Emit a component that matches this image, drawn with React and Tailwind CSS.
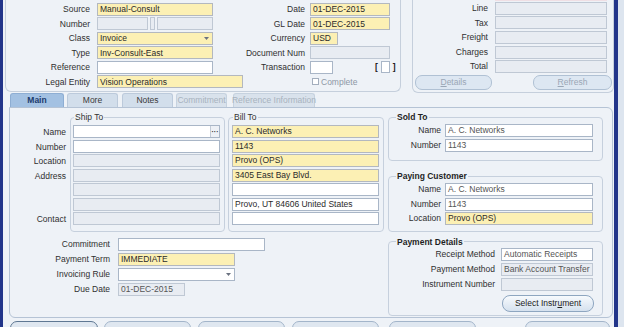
import React from 'react';

const tones = {
  y: 'bg-[#fcf0b4] border-[#b3b8bf]',
  w: 'bg-white border-[#a9b6c7]',
  g: 'bg-[#e8ecf2] border-[#bfc8d4]',
};

function Field({ w, tone = 'w', children, arrow, dots, dim }) {
  return (
    <div className={`h-[13px] shrink-0 border ${tones[tone]} ${w} flex items-center overflow-hidden`}>
      <span className={`pl-[2px] whitespace-nowrap ${dim ? 'text-[#555]' : 'text-[#2a2a2a]'}`}>{children}</span>
      {arrow && (
        <svg className="ml-auto mr-[3px]" width="5" height="3" viewBox="0 0 5 3">
          <path d="M0 0h5L2.5 3z" fill="#6b7280" />
        </svg>
      )}
      {dots && (
        <div className="ml-auto h-full w-[9px] border-l border-[#c3cbd6] bg-[#eef1f6] flex items-center justify-center text-[7px] font-bold leading-none text-[#333]">
          ···
        </div>
      )}
    </div>
  );
}

function Label({ w, children, h = 'h-[14.5px]' }) {
  return (
    <div className={`${w} ${h} shrink-0 flex items-center justify-end whitespace-nowrap text-[#2f2f2f]`}>
      {children}
    </div>
  );
}

function Group({ title, bold, className, children }) {
  return (
    <fieldset className={`border border-[#c6d0dd] rounded-[4px] ${className}`}>
      <legend className={`leading-[10px] px-[1px] ${bold ? 'ml-[7px] font-bold text-[#1f1f1f]' : 'ml-[1px] text-[#333]'}`}>
        {title}
      </legend>
      {children}
    </fieldset>
  );
}

function Tab({ w, ml, state, children }) {
  const look =
    state === 'on'
      ? 'bg-[#a3c1e2] text-[#1c3b6d] font-bold border-[#8eaed3]'
      : state === 'off'
      ? 'bg-[#d9e2ec] text-[#a8b2be] border-[#c6d2df]'
      : 'bg-[#d2deeb] text-[#3a3a3a] border-[#bccadb]';
  return (
    <div className={`${w} ${ml} h-[14px] rounded-t-[3px] border-x border-t ${look} flex items-center justify-center whitespace-nowrap`}>
      {children}
    </div>
  );
}

export default function App() {
  return (
    <div className="w-[624px] h-[327px] overflow-hidden flex bg-[#eef2f7] text-[8.5px] leading-none font-['Liberation_Sans',Arial,sans-serif]">
      <div className="w-[3px] shrink-0 bg-[#22358a]" />

      <div className="w-[611px] shrink-0 flex flex-col">
        {/* header */}
        <div className="flex items-start h-[93px] shrink-0">
          <div className="ml-[2px] w-[396px] h-[92px] border-x border-b border-[#c5cfdc] rounded-b-[6px] pt-[2px] flex flex-col">
            <div className="flex items-center h-[14.5px]">
              <Label w="w-[84px]">Source</Label>
              <div className="ml-[7px] w-[146px]"><Field w="w-[116px]" tone="y">Manual-Consult</Field></div>
              <Label w="w-[62px]">Date</Label>
              <div className="ml-[5px]"><Field w="w-[80px]" tone="y">01-DEC-2015</Field></div>
            </div>
            <div className="flex items-center h-[14.5px]">
              <Label w="w-[84px]">Number</Label>
              <div className="ml-[7px] w-[146px] flex gap-[2px]">
                <Field w="w-[51px]" tone="g" />
                <Field w="w-[5px]" tone="g" />
                <Field w="w-[56px]" tone="g" />
              </div>
              <Label w="w-[62px]">GL Date</Label>
              <div className="ml-[5px]"><Field w="w-[80px]" tone="y">01-DEC-2015</Field></div>
            </div>
            <div className="flex items-center h-[14.5px]">
              <Label w="w-[84px]">Class</Label>
              <div className="ml-[7px] w-[146px]"><Field w="w-[116px]" tone="y" arrow>Invoice</Field></div>
              <Label w="w-[62px]">Currency</Label>
              <div className="ml-[5px]"><Field w="w-[28px]" tone="y">USD</Field></div>
            </div>
            <div className="flex items-center h-[14.5px]">
              <Label w="w-[84px]">Type</Label>
              <div className="ml-[7px] w-[146px]"><Field w="w-[116px]" tone="y">Inv-Consult-East</Field></div>
              <Label w="w-[62px]">Document Num</Label>
              <div className="ml-[5px]"><Field w="w-[80px]" tone="g" /></div>
            </div>
            <div className="flex items-center h-[14.5px]">
              <Label w="w-[84px]">Reference</Label>
              <div className="ml-[7px] w-[146px]"><Field w="w-[116px]" tone="w" /></div>
              <Label w="w-[62px]">Transaction</Label>
              <div className="ml-[5px] flex items-center">
                <Field w="w-[23px]" tone="w" />
                <span className="ml-[42px] text-[#222] font-bold">[</span>
                <div className="ml-[3px] w-[9px] h-[12px] bg-white border border-[#a9b6c7]" />
                <span className="ml-[3px] text-[#222] font-bold">]</span>
              </div>
            </div>
            <div className="flex items-center h-[14.5px]">
              <Label w="w-[84px]">Legal Entity</Label>
              <div className="ml-[7px] w-[146px]"><Field w="w-[146px]" tone="y">Vision Operations</Field></div>
              <div className="w-[62px] shrink-0" />
              <div className="ml-[7px] flex items-center">
                <div className="w-[7px] h-[7px] border border-[#a3aebd] bg-white" />
                <span className="ml-[2px] text-[#8d97a5]">Complete</span>
              </div>
            </div>
          </div>

          <div className="ml-[11px] w-[202px] h-[93px] border-x border-b border-[#c5cfdc] rounded-b-[6px] flex flex-col">
            <div className="ml-[82px] w-[112px] h-[1px] bg-[#f0dfe4]" />
            {['Line', 'Tax', 'Freight', 'Charges', 'Total'].map((t) => (
              <div key={t} className="flex items-center h-[14.6px]">
                <Label w="w-[75px]">{t}</Label>
                <div className="ml-[7px]"><Field w="w-[112px]" tone="g" /></div>
              </div>
            ))}
            <div className="flex mt-[1px]">
              <div className="ml-[2px] w-[77px] h-[15px] rounded-[7px] border border-[#b0c1d4] bg-[#dde7f2] text-[#9aa6b5] flex items-center justify-center">
                <span><u>D</u>etails</span>
              </div>
              <div className="ml-[41px] w-[79px] h-[15px] rounded-[7px] border border-[#b0c1d4] bg-[#dde7f2] text-[#9aa6b5] flex items-center justify-center">
                <span><u>R</u>efresh</span>
              </div>
            </div>
          </div>
        </div>

        {/* tabs */}
        <div className="flex items-end h-[14px] shrink-0">
          <Tab w="w-[54px]" ml="ml-[7px]" state="on">Main</Tab>
          <Tab w="w-[51px]" ml="ml-[3px]">More</Tab>
          <Tab w="w-[51px]" ml="ml-[4px]">Notes</Tab>
          <Tab w="w-[51px]" ml="ml-[3px]" state="off">Commitment</Tab>
          <Tab w="w-[82px]" ml="ml-[6px]" state="off">Reference Information</Tab>
        </div>

        {/* tab panel */}
        <div className="ml-[6px] w-[604px] h-[211px] shrink-0 border border-[#b5c3d5] rounded-b-[6px] rounded-tr-[6px] overflow-hidden flex flex-col">
          <div className="flex items-start pt-[4px]">
            <div className="w-[56px] shrink-0 pt-[13px] flex flex-col">
              <Label w="w-full">Name</Label>
              <Label w="w-full">Number</Label>
              <Label w="w-full">Location</Label>
              <Label w="w-full">Address</Label>
              <Label w="w-full" />
              <Label w="w-full" />
              <Label w="w-full">Contact</Label>
            </div>

            <Group title="Ship To" className="ml-[4px] w-[155px] shrink-0 pl-[2px] pr-[4px] pt-[3px] pb-[4px]">
              <div className="h-[14.5px]"><Field w="w-[147px]" tone="w" dots /></div>
              <div className="h-[14.5px]"><Field w="w-[147px]" tone="w" /></div>
              <div className="h-[14.5px]"><Field w="w-[147px]" tone="g" /></div>
              <div className="h-[14.5px]"><Field w="w-[147px]" tone="g" /></div>
              <div className="h-[14.5px]"><Field w="w-[147px]" tone="g" /></div>
              <div className="h-[14.5px]"><Field w="w-[147px]" tone="g" /></div>
              <div className="h-[14.5px]"><Field w="w-[147px]" tone="g" /></div>
            </Group>

            <Group title="Bill To" className="ml-[3px] w-[156px] shrink-0 pl-[3px] pr-[4px] pt-[3px] pb-[4px]">
              <div className="h-[14.5px]"><Field w="w-[147px]" tone="y">A. C. Networks</Field></div>
              <div className="h-[14.5px]"><Field w="w-[147px]" tone="y">1143</Field></div>
              <div className="h-[14.5px]"><Field w="w-[147px]" tone="y">Provo (OPS)</Field></div>
              <div className="h-[14.5px]"><Field w="w-[147px]" tone="y">3405 East Bay Blvd.</Field></div>
              <div className="h-[14.5px]"><Field w="w-[147px]" tone="w" /></div>
              <div className="h-[14.5px]"><Field w="w-[147px]" tone="w">Provo, UT 84606 United States</Field></div>
              <div className="h-[14.5px]"><Field w="w-[147px]" tone="w" /></div>
            </Group>

            <div className="ml-[4px] w-[215px] shrink-0 flex flex-col">
              <Group title="Sold To" bold className="w-full pt-[2px] pb-[7px]">
                <div className="flex h-[14.5px]">
                  <Label w="w-[52px]" h="h-[13px]">Name</Label>
                  <div className="ml-[4px]"><Field w="w-[148px]" tone="w" dim>A. C. Networks</Field></div>
                </div>
                <div className="flex h-[14.5px]">
                  <Label w="w-[52px]" h="h-[13px]">Number</Label>
                  <div className="ml-[4px]"><Field w="w-[148px]" tone="w" dim>1143</Field></div>
                </div>
              </Group>
              <Group title="Paying Customer" bold className="mt-[10px] w-full pt-[2px] pb-[4px]">
                <div className="flex h-[14.5px]">
                  <Label w="w-[52px]" h="h-[13px]">Name</Label>
                  <div className="ml-[4px]"><Field w="w-[148px]" tone="w" dim>A. C. Networks</Field></div>
                </div>
                <div className="flex h-[14.5px]">
                  <Label w="w-[52px]" h="h-[13px]">Number</Label>
                  <div className="ml-[4px]"><Field w="w-[148px]" tone="w" dim>1143</Field></div>
                </div>
                <div className="flex h-[14.5px]">
                  <Label w="w-[52px]" h="h-[13px]">Location</Label>
                  <div className="ml-[4px]"><Field w="w-[148px]" tone="y">Provo (OPS)</Field></div>
                </div>
              </Group>
            </div>
          </div>

          <div className="flex items-start">
            <div className="w-[378px] shrink-0 pt-[6px] flex flex-col">
              <div className="flex h-[15px]">
                <Label w="w-[100px]" h="h-[13px]">Commitment</Label>
                <div className="ml-[8px]"><Field w="w-[147px]" tone="w" /></div>
              </div>
              <div className="flex h-[15px]">
                <Label w="w-[100px]" h="h-[13px]">Payment Term</Label>
                <div className="ml-[8px]"><Field w="w-[117px]" tone="y">IMMEDIATE</Field></div>
              </div>
              <div className="flex h-[15px]">
                <Label w="w-[100px]" h="h-[13px]">Invoicing Rule</Label>
                <div className="ml-[8px]"><Field w="w-[117px]" tone="w" arrow /></div>
              </div>
              <div className="flex h-[15px]">
                <Label w="w-[100px]" h="h-[13px]">Due Date</Label>
                <div className="ml-[8px]"><Field w="w-[67px]" tone="g" dim>01-DEC-2015</Field></div>
              </div>
            </div>

            <Group title="Payment Details" bold className="mt-[5px] w-[215px] shrink-0 pt-[1px] pb-[3px]">
              <div className="flex h-[15px]">
                <Label w="w-[106px]" h="h-[13px]">Receipt Method</Label>
                <div className="ml-[6px]"><Field w="w-[92px]" tone="w" dim>Automatic Receipts</Field></div>
              </div>
              <div className="flex h-[15px]">
                <Label w="w-[106px]" h="h-[13px]">Payment Method</Label>
                <div className="ml-[6px]"><Field w="w-[92px]" tone="g" dim>Bank Account Transfer</Field></div>
              </div>
              <div className="flex h-[15px]">
                <Label w="w-[106px]" h="h-[13px]">Instrument Number</Label>
                <div className="ml-[6px]"><Field w="w-[92px]" tone="g" /></div>
              </div>
              <div className="ml-[113px] mt-[2px] w-[92px] h-[17px] rounded-[8px] border border-[#8ea6c0] bg-gradient-to-b from-[#f7fafd] to-[#d5e1ee] text-[#222] flex items-center justify-center">
                <span>Select Instr<u>u</u>ment</span>
              </div>
            </Group>
          </div>
        </div>

        {/* bottom buttons */}
        <div className="flex mt-[3px]">
          <div className="ml-[7px] w-[88px] h-[14px] rounded-t-[7px] border border-[#5f7893] bg-[#dfe7f0]" />
          <div className="ml-[6px] w-[87px] h-[14px] rounded-t-[7px] border border-[#a3b5ca] bg-[#dfe7f0]" />
          <div className="ml-[7px] w-[87px] h-[14px] rounded-t-[7px] border border-[#a3b5ca] bg-[#dfe7f0]" />
          <div className="ml-[7px] w-[87px] h-[14px] rounded-t-[7px] border border-[#a3b5ca] bg-[#dfe7f0]" />
          <div className="ml-[10px] w-[87px] h-[14px] rounded-t-[7px] border border-[#a3b5ca] bg-[#dfe7f0]" />
          <div className="ml-[49px] w-[85px] h-[14px] rounded-t-[7px] border border-[#a3b5ca] bg-[#dfe7f0]" />
        </div>
      </div>

      <div className="w-[4px] shrink-0 bg-[#22358a]" />
      <div className="flex-1 bg-[#dde5ef]" />
    </div>
  );
}
